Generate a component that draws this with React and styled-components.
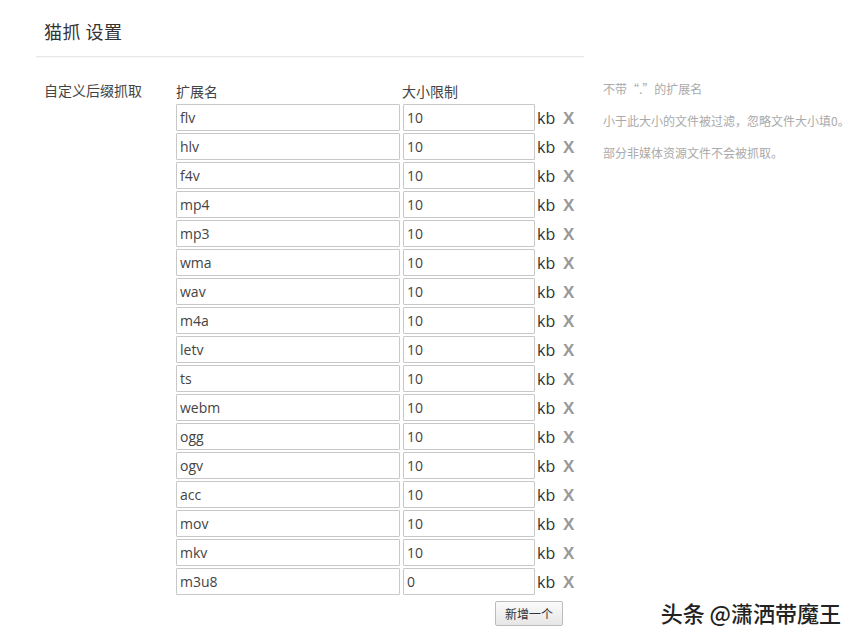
import React from 'react';
import styled, { createGlobalStyle } from 'styled-components';

const GlobalStyle = createGlobalStyle`
  html, body {
    margin: 0;
    padding: 0;
    background: #fff;
    font-family: "Microsoft YaHei", "Noto Sans CJK SC", "Liberation Sans", sans-serif;
  }
`;

const rows = [
  ['flv', '10'], ['hlv', '10'], ['f4v', '10'], ['mp4', '10'], ['mp3', '10'],
  ['wma', '10'], ['wav', '10'], ['m4a', '10'], ['letv', '10'], ['ts', '10'],
  ['webm', '10'], ['ogg', '10'], ['ogv', '10'], ['acc', '10'], ['mov', '10'],
  ['mkv', '10'], ['m3u8', '0'],
];

const Page = styled.div`
  position: relative;
  width: 858px;
  height: 643px;
  padding: 18px 0 0 44px;
  box-sizing: border-box;
  overflow: hidden;
`;

const Title = styled.h1`
  margin: 0;
  font-size: 18px;
  font-weight: normal;
  color: #333;
  line-height: 26px;
  letter-spacing: 0.5px;
`;

const Rule = styled.div`
  margin: 12px 0 0 -8px;
  width: 548px;
  height: 1px;
  background: #e8e8e8;
  box-shadow: 0 1px 0 #f8f8f8;
`;

const Main = styled.div`
  display: flex;
  margin-top: 22px;
`;

const Label = styled.div`
  width: 132px;
  font-size: 14px;
  color: #444;
  line-height: 20px;
  padding-top: 1px;
`;

const Table = styled.div`
  width: 408px;
  display: flex;
  flex-direction: column;
`;

const HeadRow = styled.div`
  display: flex;
  font-size: 14px;
  color: #444;
  line-height: 18px;
  height: 21px;
  padding-top: 3px;
`;

const HeadCell = styled.div`
  width: ${p => p.$w}px;
`;

const Row = styled.div`
  display: flex;
  align-items: center;
  height: 29px;
`;

const Field = styled.input`
  box-sizing: border-box;
  width: ${p => p.$w}px;
  height: 27px;
  margin-right: 3px;
  padding: 0 0 0 3px;
  border: 1px solid #c8c8c8;
  border-radius: 1px;
  font-family: "Open Sans", "Liberation Sans", sans-serif;
  font-size: 14px;
  color: #444;
  background: #fff;
  outline: none;
`;

const Unit = styled.span`
  font-family: "Open Sans", "Liberation Sans", sans-serif;
  font-size: 16px;
  color: #333;
  width: 26px;
  margin-left: -1px;
`;

const Remove = styled.span`
  font-family: "Liberation Sans", Arial, sans-serif;
  font-size: 17px;
  font-weight: bold;
  color: #999;
  padding-top: 3px;
  cursor: pointer;
`;

const Footer = styled.div`
  display: flex;
  justify-content: flex-end;
  padding: 5px 21px 0 0;
`;

const AddButton = styled.button`
  height: 25px;
  padding: 0 9px;
  border: 1px solid #bbb;
  border-radius: 2px;
  background: linear-gradient(#fbfbfb, #e6e6e6);
  font-family: inherit;
  font-size: 12px;
  color: #333;
`;

const Help = styled.div`
  margin-left: 19px;
  display: flex;
  flex-direction: column;
  gap: 14px;
  font-size: 12px;
  color: #aaa;
  line-height: 18px;
  padding-top: 1px;
`;

const Watermark = styled.div`
  position: absolute;
  right: 17px;
  bottom: 15px;
  font-size: 22px;
  font-weight: 500;
  color: #222;
  text-shadow: 0 0 2px #fff, 0 0 2px #fff;
`;

export default function App() {
  return (
    <>
      <GlobalStyle />
      <Page>
        <Title>猫抓 设置</Title>
        <Rule />
        <Main>
          <Label>自定义后缀抓取</Label>
          <Table>
            <HeadRow>
              <HeadCell $w={226}>扩展名</HeadCell>
              <HeadCell $w={135}>大小限制</HeadCell>
            </HeadRow>
            {rows.map(([ext, size], i) => (
              <Row key={i}>
                <Field $w={224} defaultValue={ext} />
                <Field $w={132} defaultValue={size} />
                <Unit>kb</Unit>
                <Remove>X</Remove>
              </Row>
            ))}
            <Footer>
              <AddButton>新增一个</AddButton>
            </Footer>
          </Table>
          <Help>
            <div>不带“.”的扩展名</div>
            <div>小于此大小的文件被过滤，忽略文件大小填0。</div>
            <div>部分非媒体资源文件不会被抓取。</div>
          </Help>
        </Main>
        <Watermark>头条 @潇洒带魔王</Watermark>
      </Page>
    </>
  );
}
